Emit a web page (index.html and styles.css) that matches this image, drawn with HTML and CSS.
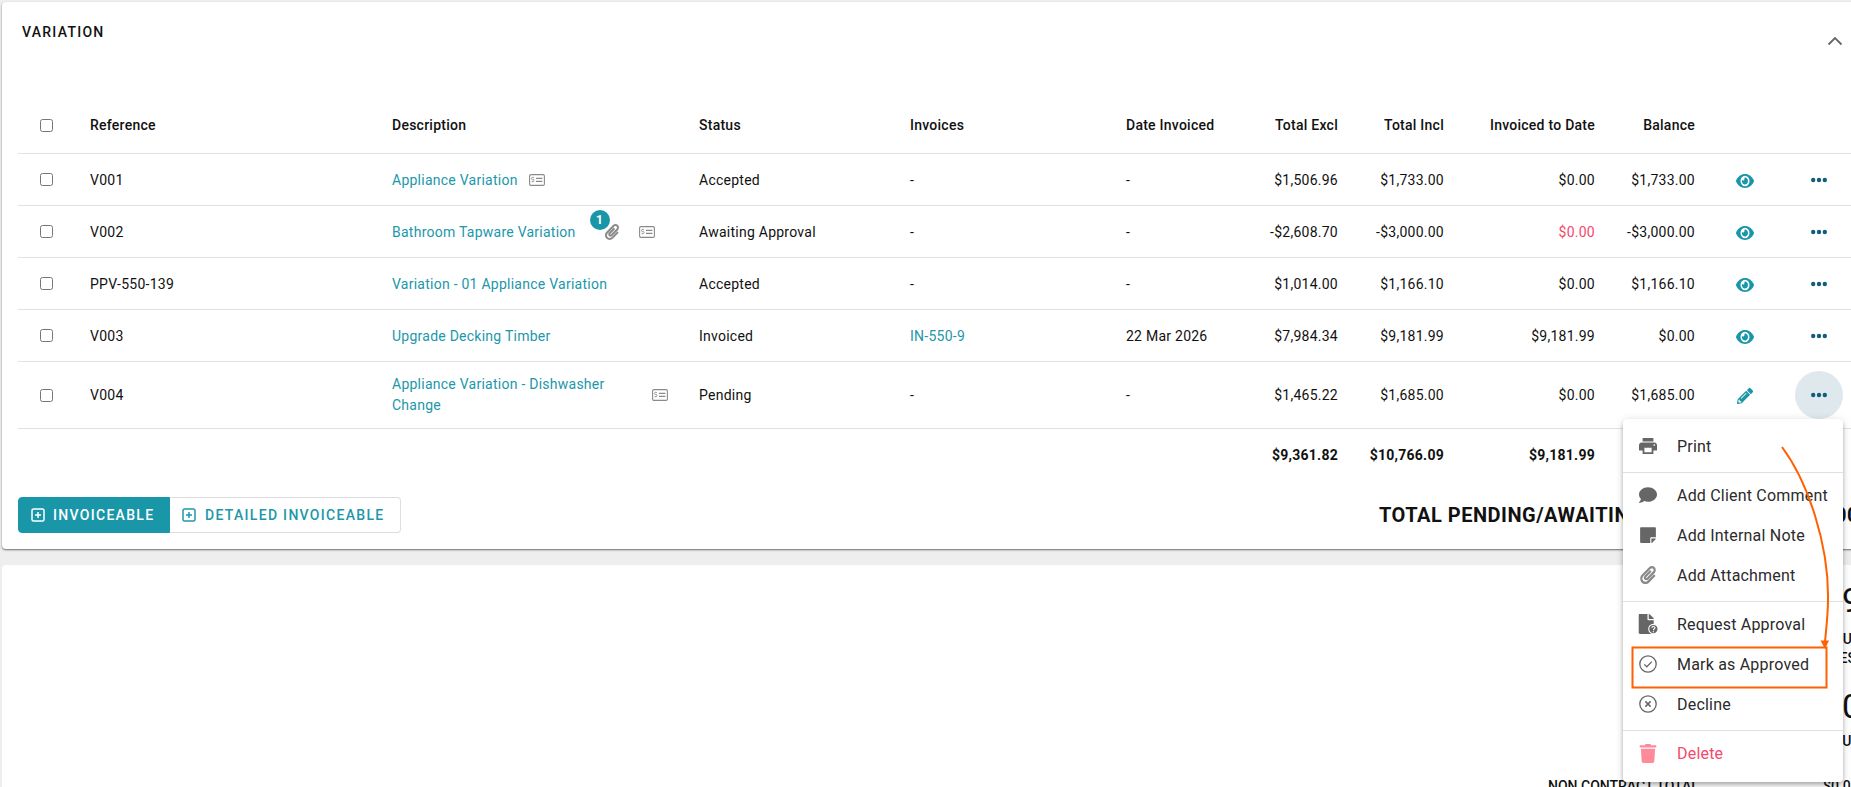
FILE: index.html
```html
<!DOCTYPE html>
<html lang="en">
<head>
<meta charset="utf-8">
<title>Variation</title>
<link rel="stylesheet" href="styles.css">
</head>
<body>
<svg class="defs" width="0" height="0" aria-hidden="true">
  <defs>
    <symbol id="i-eye" viewBox="0 64 576 384" preserveAspectRatio="none"><path fill="currentColor" d="M572.52 241.4C518.29 135.59 410.93 64 288 64S57.68 135.64 3.48 241.41a32.35 32.35 0 0 0 0 29.19C57.71 376.41 165.07 448 288 448s230.32-71.64 284.52-177.41a32.35 32.35 0 0 0 0-29.19zM288 400a144 144 0 1 1 144-144 143.93 143.93 0 0 1-144 144zm0-240a95.31 95.31 0 0 0-25.31 3.79 47.85 47.85 0 0 1-66.9 66.9A95.78 95.78 0 1 0 288 160z"/></symbol>
    <symbol id="i-dots" viewBox="0 0 16 16"><circle cx="2.2" cy="8" r="2.2" fill="currentColor"/><circle cx="8" cy="8" r="2.2" fill="currentColor"/><circle cx="13.8" cy="8" r="2.2" fill="currentColor"/></symbol>
    <symbol id="i-pencil" viewBox="0 0 512 512"><path fill="currentColor" d="M497.9 142.1l-46.1 46.1c-4.7 4.7-12.3 4.7-17 0l-111-111c-4.7-4.7-4.7-12.3 0-17l46.1-46.1c18.7-18.7 49.1-18.7 67.9 0l60.1 60.1c18.8 18.7 18.8 49.1 0 67.9zM284.2 99.8L21.6 362.4.4 483.9c-2.9 16.4 11.4 30.6 27.8 27.8l121.5-21.3 262.6-262.6c4.7-4.7 4.7-12.3 0-17l-111-111c-4.8-4.7-12.4-4.7-17.1 0zM124.1 339.9c-5.5-5.5-5.5-14.3 0-19.8l154-154c5.5-5.5 14.3-5.5 19.8 0s5.5 14.3 0 19.8l-154 154c-5.5 5.5-14.3 5.5-19.8 0zM88 424h48v36.3l-64.5 11.3-31.1-31.1L51.7 376H88v48z"/></symbol>
    <symbol id="i-clip" viewBox="0 0 448 512"><path fill="currentColor" d="M43.246 466.142c-58.43-60.289-57.341-157.511 1.386-217.581L254.392 34c44.316-45.332 116.351-45.336 160.671 0 43.89 44.894 43.943 117.329 0 162.276L232.214 383.128c-29.855 30.537-78.633 30.111-107.982-.998-28.275-29.97-27.368-77.473 1.452-106.953l143.743-146.835c6.182-6.314 16.312-6.422 22.626-.241l22.861 22.379c6.315 6.182 6.422 16.312.241 22.626L171.427 319.927c-4.932 5.045-5.236 13.428-.648 18.292 4.372 4.634 11.245 4.711 15.688.165l182.849-186.851c19.613-20.062 19.613-52.725-.011-72.798-19.189-19.627-49.957-19.637-69.154 0L90.39 293.295c-34.763 35.56-35.299 93.12-1.191 128.313 34.01 35.093 88.985 35.137 123.058.286l172.06-175.999c6.177-6.319 16.307-6.433 22.626-.256l22.877 22.364c6.319 6.177 6.434 16.307.256 22.626l-172.06 175.998c-59.576 60.938-155.943 60.216-214.77-.485z"/></symbol>
    <symbol id="i-card" viewBox="0 0 16 12"><rect x=".6" y=".6" width="14.8" height="10.8" rx="1.4" fill="none" stroke="currentColor" stroke-width="1.1"/><path d="M5 3.6H3.4a.8.8 0 0 0 0 1.9h.8a.8.8 0 0 1 0 1.9H2.6M3.8 2.8v.8M3.8 7.4v.9" fill="none" stroke="currentColor" stroke-width=".8"/><path d="M7 4.4h6.4M7 7.4h6.4" fill="none" stroke="currentColor" stroke-width="1.1"/></symbol>
    <symbol id="i-plus" viewBox="0 0 14 14"><rect x="1" y="1" width="12" height="12" rx="1.6" fill="none" stroke="currentColor" stroke-width="1.5"/><path d="M7 4v6M4 7h6" fill="none" stroke="currentColor" stroke-width="1.5"/></symbol>
  </defs>
</svg>

<main class="page">
  <section class="card card-variation">
    <header class="card-head">
      <h2 class="card-title">VARIATION</h2>
      <svg class="chevron" viewBox="0 0 16 10" width="16" height="10"><path d="M1.5 8.5 8 2l6.5 6.5" fill="none" stroke="#666" stroke-width="1.8"/></svg>
    </header>

    <table class="grid">
      <colgroup>
        <col class="c-check"><col class="c-ref"><col class="c-desc"><col class="c-status"><col class="c-inv"><col class="c-date"><col class="c-excl"><col class="c-incl"><col class="c-todate"><col class="c-bal"><col class="c-eye"><col class="c-more"><col>
      </colgroup>
      <thead>
        <tr>
          <th class="check"><input type="checkbox"></th>
          <th>Reference</th><th>Description</th><th>Status</th><th>Invoices</th><th>Date Invoiced</th>
          <th class="num">Total Excl</th><th class="num">Total Incl</th><th class="num">Invoiced to Date</th><th class="num">Balance</th>
          <th></th><th></th><th></th>
        </tr>
      </thead>
      <tbody>
        <tr>
          <td class="check"><input type="checkbox"></td>
          <td>V001</td>
          <td><div class="desc"><a class="link">Appliance Variation</a><svg class="i-card"><use href="#i-card"/></svg></div></td>
          <td>Accepted</td><td>-</td><td>-</td>
          <td class="num">$1,506.96</td><td class="num">$1,733.00</td><td class="num">$0.00</td><td class="num">$1,733.00</td>
          <td class="act"><svg class="i-eye"><use href="#i-eye"/></svg></td>
          <td class="act"><span class="more"><svg class="i-dots"><use href="#i-dots"/></svg></span></td><td></td>
        </tr>
        <tr>
          <td class="check"><input type="checkbox"></td>
          <td>V002</td>
          <td><div class="desc"><a class="link">Bathroom Tapware Variation</a>
            <span class="clip"><svg class="i-clip"><use href="#i-clip"/></svg><span class="badge">1</span></span>
            <svg class="i-card i-card-after"><use href="#i-card"/></svg></div></td>
          <td>Awaiting Approval</td><td>-</td><td>-</td>
          <td class="num">-$2,608.70</td><td class="num">-$3,000.00</td><td class="num red">$0.00</td><td class="num">-$3,000.00</td>
          <td class="act"><svg class="i-eye"><use href="#i-eye"/></svg></td>
          <td class="act"><span class="more"><svg class="i-dots"><use href="#i-dots"/></svg></span></td><td></td>
        </tr>
        <tr>
          <td class="check"><input type="checkbox"></td>
          <td>PPV-550-139</td>
          <td><div class="desc"><a class="link">Variation - 01 Appliance Variation</a></div></td>
          <td>Accepted</td><td>-</td><td>-</td>
          <td class="num">$1,014.00</td><td class="num">$1,166.10</td><td class="num">$0.00</td><td class="num">$1,166.10</td>
          <td class="act"><svg class="i-eye"><use href="#i-eye"/></svg></td>
          <td class="act"><span class="more"><svg class="i-dots"><use href="#i-dots"/></svg></span></td><td></td>
        </tr>
        <tr>
          <td class="check"><input type="checkbox"></td>
          <td>V003</td>
          <td><div class="desc"><a class="link">Upgrade Decking Timber</a></div></td>
          <td>Invoiced</td><td><a class="link">IN-550-9</a></td><td>22 Mar 2026</td>
          <td class="num">$7,984.34</td><td class="num">$9,181.99</td><td class="num">$9,181.99</td><td class="num">$0.00</td>
          <td class="act"><svg class="i-eye"><use href="#i-eye"/></svg></td>
          <td class="act"><span class="more"><svg class="i-dots"><use href="#i-dots"/></svg></span></td><td></td>
        </tr>
        <tr class="row-tall">
          <td class="check"><input type="checkbox"></td>
          <td>V004</td>
          <td><div class="desc"><a class="link link-wrap">Appliance Variation - Dishwasher Change</a><svg class="i-card"><use href="#i-card"/></svg></div></td>
          <td>Pending</td><td>-</td><td>-</td>
          <td class="num">$1,465.22</td><td class="num">$1,685.00</td><td class="num">$0.00</td><td class="num">$1,685.00</td>
          <td class="act"><svg class="i-pencil"><use href="#i-pencil"/></svg></td>
          <td class="act"><span class="more more-active"><svg class="i-dots"><use href="#i-dots"/></svg></span></td><td></td>
        </tr>
      </tbody>
      <tfoot>
        <tr>
          <td></td><td></td><td></td><td></td><td></td><td></td>
          <td class="num">$9,361.82</td><td class="num">$10,766.09</td><td class="num">$9,181.99</td><td class="num">$0.00</td>
          <td></td><td></td><td></td>
        </tr>
      </tfoot>
    </table>

    <footer class="card-foot">
      <div class="btn-group">
        <button class="btn btn-primary"><svg class="i-plus"><use href="#i-plus"/></svg>INVOICEABLE</button>
        <button class="btn btn-outline"><svg class="i-plus"><use href="#i-plus"/></svg>DETAILED INVOICEABLE</button>
      </div>
      <div class="pending-total"><span>TOTAL PENDING/AWAITING APPROVAL</span><span>$1,685.00</span></div>
    </footer>
  </section>

  <section class="card card-summary">
    <div class="summary">
      <div class="sum-big p-money">$9,181.99</div>
      <div class="sum-label sum-first p-word">OUTSTANDING</div>
      <div class="sum-label p-incl">INCLUDES</div>
      <div class="sum-big sum-second p-money">$0.00</div>
      <div class="sum-label sum-due p-word">DUE</div>
      <div class="sum-label sum-non"><span class="sum-non-name">NON CONTRACT TOTAL</span><span>$0.00</span></div>
    </div>
  </section>
</main>

<nav class="menu">
  <a class="menu-item"><svg class="mi" viewBox="2 3 20 18"><path fill="currentColor" d="M19 8H5c-1.66 0-3 1.34-3 3v6h4v4h12v-4h4v-6c0-1.66-1.34-3-3-3zm-3 11H8v-5h8v5zm3-7c-.55 0-1-.45-1-1s.45-1 1-1 1 .45 1 1-.45 1-1 1zm-1-9H6v4h12V3z"/></svg>Print</a>
  <hr class="menu-sep">
  <a class="menu-item"><svg class="mi" viewBox="0 0 512 512"><path fill="currentColor" d="M256 32C114.6 32 0 125.1 0 240c0 49.6 21.4 95 57 130.7C44.5 421.1 2.7 466 2.2 466.5c-2.2 2.3-2.8 5.7-1.5 8.7S4.8 480 8 480c66.3 0 116-31.8 140.6-51.4 32.7 12.3 69 19.4 107.4 19.4 141.4 0 256-93.1 256-208S397.4 32 256 32z"/></svg>Add Client Comment</a>
  <a class="menu-item"><svg class="mi" viewBox="0 0 448 512"><path fill="currentColor" d="M312 320h136V56c0-13.3-10.7-24-24-24H24C10.7 32 0 42.7 0 56v400c0 13.3 10.7 24 24 24h264V344c0-13.2 10.8-24 24-24zm129 55l-98 98c-4.5 4.5-10.6 7-17 7h-6V352h128v6.1c0 6.3-2.5 12.4-7 16.9z"/></svg>Add Internal Note</a>
  <a class="menu-item"><svg class="mi mi-soft" viewBox="0 0 448 512"><use href="#i-clip"/></svg>Add Attachment</a>
  <hr class="menu-sep">
  <a class="menu-item"><svg class="mi mi-wide" viewBox="0 0 500 512"><path fill="currentColor" d="M224 136V0H24C10.7 0 0 10.7 0 24v464c0 13.3 10.7 24 24 24h336c13.3 0 24-10.7 24-24V160H248c-13.2 0-24-10.8-24-24zm160-14.1v6.1H256V0h6.1c6.4 0 12.5 2.5 17 7l97.9 98c4.5 4.5 7 10.6 7 16.9z"/><circle cx="375" cy="385" r="120" fill="currentColor" stroke="#fff" stroke-width="28"/><path d="M335 355c4-50 82-46 80 0 0 32-40 28-40 60" fill="none" stroke="#fff" stroke-width="28"/><circle cx="375" cy="455" r="17" fill="#fff"/></svg>Request Approval</a>
  <a class="menu-item"><svg class="mi" viewBox="0 0 18 18"><circle cx="9" cy="9" r="8.2" fill="none" stroke="currentColor" stroke-width="1.3"/><path d="M5.3 9.4 7.8 11.8 12.8 6.6" fill="none" stroke="currentColor" stroke-width="1.3"/></svg>Mark as Approved</a>
  <a class="menu-item"><svg class="mi" viewBox="0 0 18 18"><circle cx="9" cy="9" r="8.2" fill="none" stroke="currentColor" stroke-width="1.3"/><path d="M6.4 6.4 11.6 11.6M11.6 6.4 6.4 11.6" fill="none" stroke="currentColor" stroke-width="1.5"/></svg>Decline</a>
  <hr class="menu-sep">
  <a class="menu-item menu-danger"><svg class="mi mi-trash" viewBox="0 0 448 512"><path fill="currentColor" d="M432 32H312l-9.4-18.7A24 24 0 0 0 281.1 0H166.8a23.72 23.72 0 0 0-21.4 13.3L136 32H16A16 16 0 0 0 0 48v32a16 16 0 0 0 16 16h416a16 16 0 0 0 16-16V48a16 16 0 0 0-16-16zM53.2 467a48 48 0 0 0 47.9 45h245.8a48 48 0 0 0 47.9-45L416 128H32z"/></svg>Delete</a>
</nav>

<svg class="annotation" viewBox="0 0 1851 787" width="1851" height="787" aria-hidden="true">
  <path d="M1782 447C1808 482 1829 545 1828 600C1828 615 1826 630 1825 642" fill="none" stroke="#ff6000" stroke-width="2"/>
  <path d="M1820.5 640.5H1829L1825 649Z" fill="#ff6000"/>
  <rect x="1632.5" y="647.5" width="194" height="40" fill="none" stroke="#ff6000" stroke-width="2"/>
</svg>
</body>
</html>
```
FILE: styles.css
```css
* { box-sizing: border-box; }
html, body { margin: 0; height: 787px; overflow: hidden; }
body {
  position: relative;
  background: #eee;
  color: #111;
  font-family: Roboto, "Liberation Sans", sans-serif;
  font-size: 14px;
}
.defs { position: absolute; }

.page { width: 1870px; margin-left: 2px; padding-top: 2px; display: flex; flex-direction: column; gap: 16px; }
.card { background: #fff; border-radius: 4px; }
.card-variation { height: 547px; box-shadow: 0 1px 2px rgba(0,0,0,.55); padding-left: 16px; }

.card-head { height: 95px; padding: 20px 29px 0 4px; display: flex; justify-content: space-between; align-items: flex-start; }
.card-title { margin: 0; font-size: 14px; line-height: 20px; font-weight: 500; letter-spacing: 1.25px; color: #111; }
.chevron { margin-top: 14px; }

.grid { width: 100%; table-layout: fixed; border-collapse: separate; border-spacing: 0; letter-spacing: .25px; line-height: 20px; }
.c-check { width: 72px; } .c-ref { width: 302px; } .c-desc { width: 307px; } .c-status { width: 211px; }
.c-inv { width: 216px; } .c-date { width: 106px; } .c-excl { width: 106px; } .c-incl { width: 106px; }
.c-todate { width: 151px; } .c-bal { width: 100px; } .c-eye { width: 100px; } .c-more { width: 48px; }
.grid th, .grid td { padding: 0; text-align: left; border-bottom: 1px solid #e1e1e1; white-space: nowrap; }
.grid th { height: 57px; font-weight: 500; color: #111; }
.grid td { height: 52px; }
.grid .row-tall td { height: 67px; }
.grid tfoot td { border-bottom: 0; font-weight: 700; color: #111; letter-spacing: .25px; }
.grid .num { text-align: right; }
.grid .red { color: #f5496b; }
.grid .check { padding-left: 22px; }
.check input { display: block; margin: 0; width: 13px; height: 13px; }
.grid .act { text-align: center; }
.act svg { display: inline-block; vertical-align: middle; }

.desc { display: flex; align-items: center; }
.link { color: #2197aa; }
.link-wrap { max-width: 249px; line-height: 21px; white-space: normal; }
.i-card { width: 16px; height: 12px; margin-left: 11px; color: #8a8a8a; flex: none; }
.i-card-after { margin-left: 19px; }
.clip { position: relative; display: block; width: 16px; height: 16px; margin-left: 28px; color: #8a8a8a; }
.i-clip { display: block; width: 16px; height: 16px; }
.badge {
  position: absolute; left: -14px; top: -14px; width: 20px; height: 20px; border-radius: 50%;
  background: #1a96a9; color: #fff; font-size: 12px; font-weight: 700; line-height: 20px; text-align: center;
}
.i-eye { width: 18px; height: 14px; color: #1a96a9; }
.i-pencil { width: 16px; height: 16px; color: #1a96a9; }
.i-dots { width: 16px; height: 16px; color: #0f5f7c; }
.more { display: inline-flex; align-items: center; justify-content: center; width: 48px; height: 48px; border-radius: 50%; vertical-align: middle; }
.more-active { background: #dfe8ec; }

.card-foot { display: flex; align-items: center; margin-top: 16px; padding-right: 13px; height: 36px; }
.btn-group { display: flex; height: 36px; }
.btn {
  display: flex; align-items: center; gap: 9px; height: 36px; margin: 0; border: 1px solid transparent;
  font: 500 14px Roboto, sans-serif; letter-spacing: 1.3px; cursor: pointer;
}
.i-plus { width: 14px; height: 14px; flex: none; }
.btn-primary { width: 152px; gap: 8px; padding: 0 0 0 12px; background: #1a96a9; color: #fff; border-color: #1a96a9; border-radius: 4px 0 0 4px; }
.btn-outline { width: 231px; padding: 0 0 0 12px; background: #fff; color: #2197aa; border: 1px solid #dedede; border-left: 0; border-radius: 0 4px 4px 0; }
.pending-total { width: 480px; margin-left: auto; display: flex; justify-content: space-between; font-size: 20px; letter-spacing: .5px; font-weight: 700; line-height: 24px; color: #111; }

.card-summary { height: 240px; }
.summary { margin-left: 1546px; padding-top: 15px; font-weight: 700; color: #111; }
.sum-big { font-size: 34px; font-weight: 400; line-height: 40px; }
.sum-label { font-size: 14px; line-height: 19px; font-weight: 500; white-space: nowrap; }
.sum-first { margin-top: 10px; }
.sum-second { margin-top: 18px; }
.sum-due { margin-top: 6px; }
.sum-non { margin-top: 26px; display: flex; }
.sum-non-name { width: 275px; flex: none; }
.p-money { padding-left: 275px; }
.p-word { padding-left: 285px; }
.p-incl { padding-left: 243px; }

.menu {
  position: absolute; left: 1623px; top: 419px; width: 220px; height: 363px; padding-top: 7px;
  background: #fff; border-radius: 4px;
  box-shadow: 0 2px 4px -1px rgba(0,0,0,.2), 0 4px 5px rgba(0,0,0,.14), 0 1px 10px rgba(0,0,0,.12);
}
.menu-item { display: flex; align-items: center; gap: 20px; height: 40px; padding-left: 16px; font-size: 16px; letter-spacing: .2px; color: #2b2b2b; white-space: nowrap; }
.menu-sep { height: 1px; margin: 6px 0 2px; border: 0; background: #e0e0e0; }
.mi { width: 18px; height: 18px; flex: none; color: #666; }
.mi-soft { color: #8a8a8a; }
.mi-wide { width: 21px; height: 20px; margin-left: -1px; margin-right: -2px; }
.mi-trash { height: 19px; color: #ff8a9b; }
.menu-danger { color: #f5496b; }

.annotation { position: absolute; left: 0; top: 0; pointer-events: none; }
```
